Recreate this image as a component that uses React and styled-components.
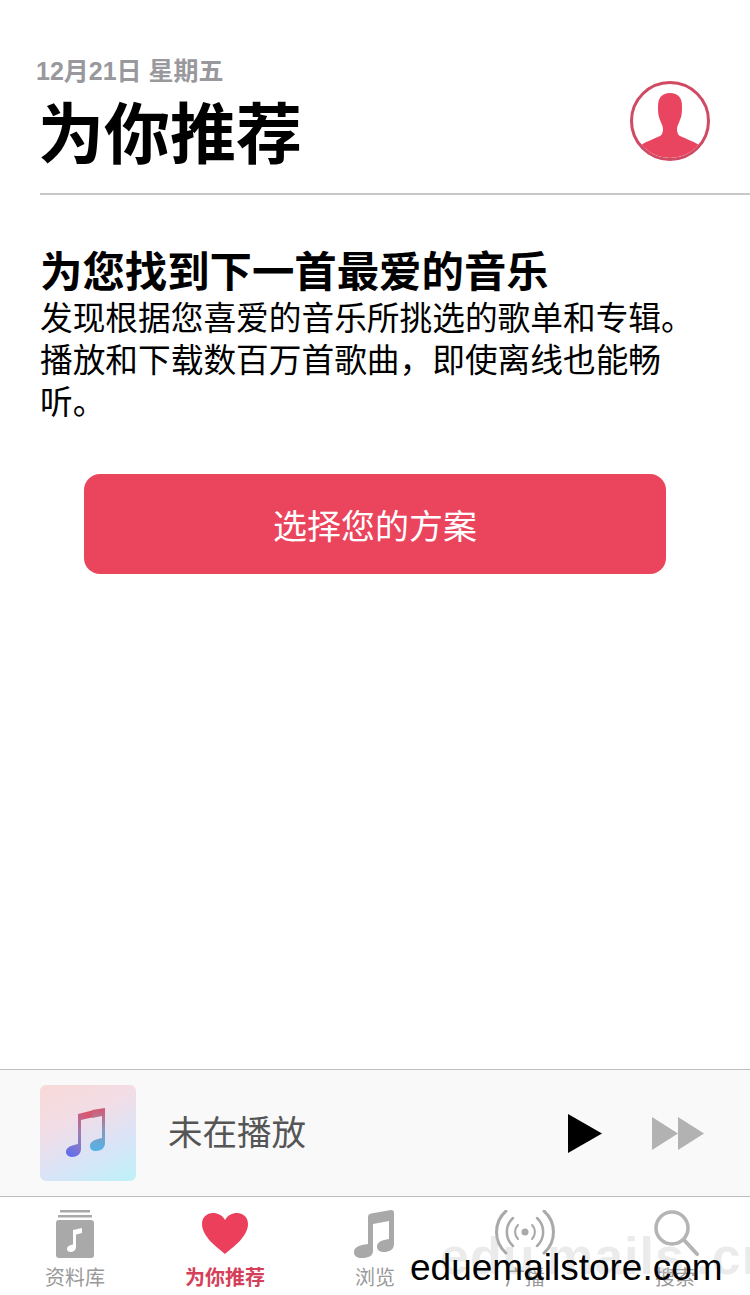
import React from 'react';
import styled, { createGlobalStyle } from 'styled-components';

const GlobalStyle = createGlobalStyle`
  html, body { margin: 0; padding: 0; background: #fff; }
  body { font-family: "Liberation Sans", "Noto Sans CJK SC", sans-serif; }
  * { box-sizing: border-box; }
`;

const Screen = styled.div`
  position: relative;
  width: 750px;
  height: 1295px;
  overflow: hidden;
  display: flex;
  flex-direction: column;
  background: #fff;
`;

const Header = styled.header`
  height: 195px;
  margin-left: 40px;
  padding-top: 55px;
  border-bottom: 2px solid #c8c8c8;
  display: flex;
  justify-content: space-between;
`;

const DateLine = styled.div`
  margin-left: -4px;
  font-size: 25px;
  line-height: 32px;
  font-weight: 700;
  color: #98989d;
`;

const Title = styled.h1`
  margin: 8px 0 0 -2px;
  font-size: 66px;
  line-height: 80px;
  font-weight: 700;
  color: #000;
`;

const Avatar = styled.div`
  width: 80px;
  height: 80px;
  margin: 26px 40px 0 0;
  border-radius: 50%;
  border: 3px solid #cf4a62;
  overflow: hidden;
  svg { display: block; width: 100%; height: 100%; }
`;

const Content = styled.main`
  flex: 1;
  padding: 53px 40px 0;
`;

const Heading = styled.h2`
  margin: 0;
  font-size: 42.4px;
  line-height: 50px;
  font-weight: 700;
  color: #000;
  white-space: nowrap;
`;

const Body = styled.p`
  margin: 0;
  font-size: 32.7px;
  line-height: 42px;
  color: #000;
  width: 660px;
`;

const ChooseButton = styled.button`
  display: block;
  width: 582px;
  height: 100px;
  margin: 50px 0 0 44px;
  border: 0;
  border-radius: 16px;
  background: #eb455e;
  color: #fff;
  font-family: inherit;
  font-size: 34px;
  font-weight: 400;
`;

const MiniPlayer = styled.section`
  height: 128px;
  flex: none;
  background: #f9f9f9;
  border-top: 1px solid #bdbdbd;
  border-bottom: 1px solid #bdbdbd;
  padding: 15px 46px 0 40px;
  display: flex;
  align-items: flex-start;
`;

const Artwork = styled.div`
  width: 96px;
  height: 96px;
  flex: none;
  border-radius: 6px;
  background: linear-gradient(155deg, #f9d9d6 0%, #f2dde6 35%, #d8e4f8 68%, #bdf2f8 100%);
  display: flex;
  align-items: center;
  justify-content: center;
`;

const NowPlaying = styled.div`
  flex: 1;
  margin: 27px 0 0 32px;
  font-size: 34.5px;
  line-height: 42px;
  color: #555;
`;

const Controls = styled.div`
  display: flex;
  gap: 50px;
  align-items: center;
  height: 96px;
`;

const TabBar = styled.nav`
  flex: none;
  height: 98px;
  display: grid;
  grid-template-columns: repeat(5, 150px);
`;

const Tab = styled.div`
  display: flex;
  flex-direction: column;
  align-items: center;
  color: ${p => (p.$active ? '#d4405a' : '#999')};
  font-size: 20px;
  line-height: 24px;
  font-weight: ${p => (p.$active ? 700 : 400)};
  svg { display: block; margin-top: 13px; margin-bottom: 8px; }
`;

const Watermark = styled.div`
  position: absolute;
  left: 440px;
  top: 1226px;
  font-size: 52px;
  line-height: 60px;
  font-weight: 700;
  letter-spacing: 1px;
  color: rgba(190, 190, 190, 0.3);
  white-space: nowrap;
  word-spacing: -4px;
`;

const StoreMark = styled.div`
  position: absolute;
  left: 410px;
  top: 1247px;
  font-size: 37px;
  line-height: 42px;
  color: #000;
  white-space: nowrap;
`;

function PersonIcon() {
  return (
    <svg viewBox="0 0 74 74">
      <path
        fill="#ea4560"
        d="M37 9c-8 0-12 5-12 13 0 5 0 10 2 14 1 3 3 6 3 9 0 3-1 6-3 7-6 3-13 5-19 9 6 8 18 13 29 13s23-5 29-13c-6-4-13-6-19-9-2-1-3-4-3-7 0-3 2-6 3-9 2-4 2-9 2-14 0-8-4-13-12-13z"
      />
    </svg>
  );
}

function ColorNote() {
  return (
    <svg width="44" height="50" viewBox="0 0 44 50">
      <defs>
        <linearGradient id="noteGrad" x1="0.1" y1="1" x2="0.6" y2="0">
          <stop offset="0" stopColor="#5d6cf0" />
          <stop offset="0.55" stopColor="#9c7fb4" />
          <stop offset="1" stopColor="#d9566f" />
        </linearGradient>
        <linearGradient id="noteGradRight" x1="0" y1="1" x2="0" y2="0">
          <stop offset="0" stopColor="#52b4e8" />
          <stop offset="0.55" stopColor="#8f93b4" />
          <stop offset="1" stopColor="#d9566f" />
        </linearGradient>
      </defs>
      <path fill="url(#noteGrad)" d="M12 6 L28 2 V9 L15 12 V41 C15 46 11 49 6 49 C2 49 0 46 0 44 C0 40 4 38 8 37 L12 36 Z" />
      <path fill="url(#noteGradRight)" d="M26 2 L39 0 V35 C39 40 35 43 30 43 C26 43 24 41 24 38 C24 34 28 32 32 31 L36 30 V8 L26 10 Z" />
    </svg>
  );
}

function LibraryIcon() {
  return (
    <svg width="40" height="48" viewBox="0 0 40 48">
      <rect x="5" y="0" width="30" height="2.5" fill="#a9a9a9" />
      <rect x="3" y="5" width="34" height="2.5" fill="#a9a9a9" />
      <rect x="1" y="10" width="38" height="38" rx="3" fill="#a9a9a9" />
      <path fill="#fff" d="M18 20 L27 18 V23 L21 24.5 V37 C21 40 18.5 42 15.5 42 C13 42 12 40.5 12 39 C12 36.5 14.5 35.3 18 34.5 Z" />
    </svg>
  );
}

function HeartIcon() {
  return (
    <svg width="48" height="48" viewBox="0 0 48 48">
      <path fill="#eb3f5c" d="M24 44 C17 38 1 27 1 14 C1 7 6 3 12 3 C17 3 21 5 24 10 C27 5 31 3 36 3 C42 3 47 7 47 14 C47 27 31 38 24 44 Z" />
    </svg>
  );
}

function NoteIcon() {
  return (
    <svg width="44" height="48" viewBox="0 0 44 48">
      <path fill="#a9a9a9" d="M15 7 C15 5 16 4 18 3.500 L38 0 C40 0 41 1 41 3 V34 C41 40 36 42 31 42 C27 42 24 40 24 37 C24 33 27 31 31 30 L36 29 V11 L20 14 V41 C20 46 15 48 9 48 C4 48 1 46 1 42 C1 38 5 36 9 35 L15 34 Z" />
    </svg>
  );
}

function RadioIcon() {
  return (
    <svg width="60" height="48" viewBox="0 0 60 48" fill="none" stroke="#a9a9a9" strokeLinecap="round">
      <circle cx="30" cy="22" r="3.500" fill="#a9a9a9" stroke="none" />
      <path strokeWidth="2" d="M23 15 A10 10 0 0 0 23 29 M37 15 A10 10 0 0 1 37 29" />
      <path strokeWidth="2.500" d="M18 8 A19 19 0 0 0 18 36 M42 8 A19 19 0 0 1 42 36" />
      <path strokeWidth="3" d="M11 1 A28 28 0 0 0 11 43 M49 1 A28 28 0 0 1 49 43" />
    </svg>
  );
}

function SearchIcon() {
  return (
    <svg width="48" height="48" viewBox="0 0 48 48" fill="none" stroke="#b4b4b4" strokeLinecap="round">
      <circle cx="21" cy="18" r="16" strokeWidth="3.500" />
      <path strokeWidth="4" d="M33 30 L46 44" />
    </svg>
  );
}

const tabs = [
  { label: '资料库', icon: <LibraryIcon /> },
  { label: '为你推荐', icon: <HeartIcon />, active: true },
  { label: '浏览', icon: <NoteIcon /> },
  { label: '广播', icon: <RadioIcon /> },
  { label: '搜索', icon: <SearchIcon /> },
];

export default function App() {
  return (
    <Screen>
      <GlobalStyle />
      <Header>
        <div>
          <DateLine>12月21日 星期五</DateLine>
          <Title>为你推荐</Title>
        </div>
        <Avatar><PersonIcon /></Avatar>
      </Header>
      <Content>
        <Heading>为您找到下一首最爱的音乐</Heading>
        <Body>发现根据您喜爱的音乐所挑选的歌单和专辑。播放和下载数百万首歌曲，即使离线也能畅听。</Body>
        <ChooseButton>选择您的方案</ChooseButton>
      </Content>
      <MiniPlayer>
        <Artwork><ColorNote /></Artwork>
        <NowPlaying>未在播放</NowPlaying>
        <Controls>
          <svg width="34" height="39" viewBox="0 0 34 39"><path fill="#000" d="M0 0 L34 19.500 L0 39 Z" /></svg>
          <svg width="52" height="33" viewBox="0 0 52 33">
            <path fill="#b2b2b2" d="M0 0 L26 16.500 L0 33 Z M26 0 L52 16.500 L26 33 Z" />
          </svg>
        </Controls>
      </MiniPlayer>
      <TabBar>
        {tabs.map(t => (
          <Tab key={t.label} $active={t.active}>
            {t.icon}
            {t.label}
          </Tab>
        ))}
      </TabBar>
      <Watermark>edu mails .cn</Watermark>
      <StoreMark>eduemailstore.com</StoreMark>
    </Screen>
  );
}
